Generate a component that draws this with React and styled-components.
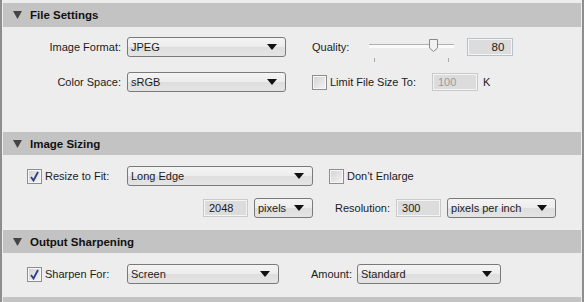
import React from "react";
import styled, { createGlobalStyle } from "styled-components";

const GlobalStyle = createGlobalStyle`
  html, body {
    margin: 0;
    padding: 0;
    background: #ededed;
  }
  body {
    font-family: "Liberation Sans", Arial, sans-serif;
    font-size: 11px;
    color: #1b1b1b;
  }
`;

const Panel = styled.div`
  width: 584px;
  height: 302px;
  box-sizing: border-box;
  padding: 3px 0 0;
  border-left: 2px solid #8d8d8d;
  border-right: 2px solid #8d8d8d;
  background: #ededed;
  overflow: hidden;
`;

const Header = styled.div`
  display: flex;
  align-items: center;
  gap: 8px;
  height: ${p => p.h || 23}px;
  margin: 0 1px;
  padding-left: 10px;
  background: #c3c3c3;
  font-weight: bold;
  font-size: 11.5px;
  color: #111;
`;

const Body = styled.div`
  display: flex;
  flex-direction: column;
  gap: ${p => p.gap || 0}px;
  padding: ${p => p.pt}px 0 ${p => p.pb}px;
`;

const Row = styled.div`
  display: flex;
  align-items: center;
  height: 20px;
`;

const Lead = styled.div`
  display: flex;
  align-items: center;
  justify-content: ${p => (p.right ? "flex-end" : "flex-start")};
  width: ${p => p.w}px;
  padding-left: ${p => p.pl || 0}px;
  padding-right: ${p => p.pr || 0}px;
  box-sizing: border-box;
  flex: none;
  white-space: nowrap;
`;

const Text = styled.span`
  margin-left: ${p => p.ml || 0}px;
  white-space: nowrap;
`;

const SelectBox = styled.div`
  display: flex;
  align-items: center;
  justify-content: space-between;
  width: ${p => p.w}px;
  height: 20px;
  margin-left: ${p => p.ml || 0}px;
  box-sizing: border-box;
  padding: 0 8px 0 3px;
  border: 1px solid #7a7a7a;
  border-radius: 3px;
  background: linear-gradient(#f4f4f4, #ececec 50%, #dedede 51%, #e4e4e4);
  flex: none;
`;

const Field = styled.div`
  display: flex;
  align-items: center;
  justify-content: ${p => (p.alignRight ? "flex-end" : "flex-start")};
  width: ${p => p.w}px;
  height: 18px;
  margin-left: ${p => p.ml || 0}px;
  box-sizing: border-box;
  padding: 0 ${p => (p.alignRight ? 8 : 5)}px 0 5px;
  border: 1px solid ${p => p.border || "#c9c9c9"};
  box-shadow: inset 0 0 0 1px #f4f4f4;
  background: #dcdcdc;
  font-size: ${p => p.fs || 11}px;
  color: ${p => (p.muted ? "#9a9a9a" : "#1b1b1b")};
  flex: none;
`;

const Box = styled.div`
  display: flex;
  align-items: center;
  justify-content: center;
  width: 15px;
  height: 15px;
  margin-left: ${p => p.ml || 0}px;
  box-sizing: border-box;
  border: 1px solid #8e8e8e;
  box-shadow: inset 0 0 0 1px #f6f6f6;
  background: linear-gradient(135deg, #d2d2d2, #f4f4f4);
  flex: none;
`;

const SliderWrap = styled.div`
  position: relative;
  width: 85px;
  height: 20px;
  margin-left: ${p => p.ml}px;
  flex: none;
`;

const Track = styled.div`
  position: absolute;
  left: 0;
  right: 0;
  top: 7px;
  height: 3px;
  border-top: 1px solid #b0b0b0;
  background: #fafafa;
`;

const Tick = styled.div`
  position: absolute;
  top: 21px;
  left: ${p => p.x}px;
  width: 1px;
  height: 4px;
  background: #a8a8a8;
`;

const Thumb = styled.svg`
  position: absolute;
  left: 60px;
  top: 2px;
`;

function Arrow() {
  return (
    <svg width="10" height="6" viewBox="0 0 10 6">
      <path d="M0 0H10L5 6Z" fill="#111" />
    </svg>
  );
}

function Disclosure() {
  return (
    <svg width="9" height="8" viewBox="0 0 9 8">
      <path d="M0 0H9L4.5 8Z" fill="#444" />
    </svg>
  );
}

function Check({ on, ml }) {
  return (
    <Box ml={ml}>
      {on && (
        <svg width="11" height="11" viewBox="0 0 11 11">
          <path d="M2 6 L4.5 9.5 L9 1" stroke="#2c3c86" strokeWidth="1.8" fill="none" />
        </svg>
      )}
    </Box>
  );
}

function Select({ value, w, ml }) {
  return (
    <SelectBox w={w} ml={ml}>
      <span>{value}</span>
      <Arrow />
    </SelectBox>
  );
}

export default function App() {
  return (
    <>
      <GlobalStyle />
      <Panel>
        <Header h={24}>
          <Disclosure />
          <span>File Settings</span>
        </Header>
        <Body pt={10} pb={40} gap={15}>
          <Row>
            <Lead w={125} right pr={6}>Image Format:</Lead>
            <Select value="JPEG" w={159} />
            <Text ml={26}>Quality:</Text>
            <SliderWrap ml={20}>
              <Track />
              <Tick x={5} />
              <Tick x={79} />
              <Thumb width="9" height="13" viewBox="0 0 9 13">
                <path d="M0.5 0.5H8.5V9L4.5 12.5L0.5 9Z" fill="#f2f2f2" stroke="#8a8a8a" />
              </Thumb>
            </SliderWrap>
            <Field w={46} ml={13} alignRight border="#b5c2cc" fs={11.5}>80</Field>
          </Row>
          <Row>
            <Lead w={125} right pr={6}>Color Space:</Lead>
            <Select value="sRGB" w={159} />
            <Check ml={26} />
            <Text ml={3}>Limit File Size To:</Text>
            <Field w={46} ml={16} muted>100</Field>
            <Text ml={5}>K</Text>
          </Row>
        </Body>

        <Header>
          <Disclosure />
          <span>Image Sizing</span>
        </Header>
        <Body pt={11} pb={12} gap={12}>
          <Row>
            <Lead w={125} pl={25}>
              <Check on />
              <Text ml={3}>Resize to Fit:</Text>
            </Lead>
            <Select value="Long Edge" w={186} />
            <Check ml={16} />
            <Text ml={3}>Don’t Enlarge</Text>
          </Row>
          <Row>
            <Lead w={201} />
            <Field w={45}>2048</Field>
            <Select value="pixels" w={59} ml={6} />
            <Text ml={22}>Resolution:</Text>
            <Field w={45} ml={6}>300</Field>
            <Select value="pixels per inch" w={109} ml={6} />
          </Row>
        </Body>

        <Header>
          <Disclosure />
          <span>Output Sharpening</span>
        </Header>
        <Body pt={11} pb={13}>
          <Row>
            <Lead w={125} pl={25}>
              <Check on />
              <Text ml={3}>Sharpen For:</Text>
            </Lead>
            <Select value="Screen" w={152} />
            <Text ml={32}>Amount:</Text>
            <Select value="Standard" w={144} ml={5} />
          </Row>
        </Body>
        <Header />
      </Panel>
    </>
  );
}
